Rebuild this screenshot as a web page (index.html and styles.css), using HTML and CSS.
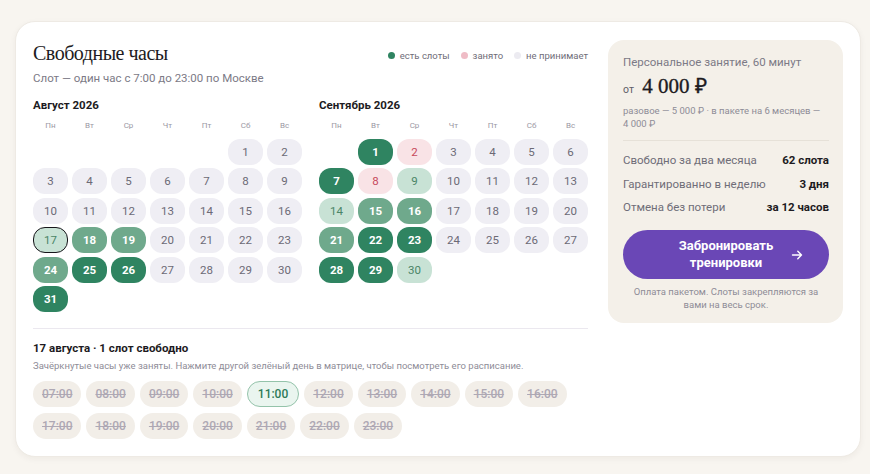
FILE: index.html
```html
<!DOCTYPE html>
<html lang="ru">
<head>
    <meta charset="UTF-8">
    <meta name="viewport" content="width=device-width, initial-scale=1.0">
    <title>Свободные часы</title>
    <link rel="stylesheet" href="styles.css">
</head>
<body>

<div class="card">
    <div class="schedule">
        <div class="schedule-head">
            <div>
                <h1>Свободные часы</h1>
                <p class="subtitle">Слот — один час с 7:00 до 23:00 по Москве</p>
            </div>
            <ul class="legend">
                <li><span class="dot dot-free"></span>есть слоты</li>
                <li><span class="dot dot-busy"></span>занято</li>
                <li><span class="dot dot-off"></span>не принимает</li>
            </ul>
        </div>

        <div class="months">
            <div class="month">
                <h3>Август 2026</h3>
                <div class="grid" id="aug"></div>
            </div>
            <div class="month">
                <h3>Сентябрь 2026</h3>
                <div class="grid" id="sep"></div>
            </div>
        </div>

        <div class="day-slots">
            <h4>17 августа · 1 слот свободно</h4>
            <p class="hint">Зачёркнутые часы уже заняты. Нажмите другой зелёный день в матрице, чтобы посмотреть его расписание.</p>
            <div class="slots" id="slots"></div>
        </div>
    </div>

    <aside class="offer">
        <p class="offer-title">Персональное занятие, 60 минут</p>
        <p class="price"><span class="from">от</span> 4&nbsp;000&nbsp;₽</p>
        <p class="price-note">разовое — 5&nbsp;000&nbsp;₽ · в пакете на 6 месяцев — 4&nbsp;000&nbsp;₽</p>
        <dl class="facts">
            <div><dt>Свободно за два месяца</dt><dd>62 слота</dd></div>
            <div><dt>Гарантированно в неделю</dt><dd>3 дня</dd></div>
            <div><dt>Отмена без потери</dt><dd>за 12 часов</dd></div>
        </dl>
        <a href="#" class="book-button">
            <span>Забронировать<br>тренировки</span>
            <svg width="12" height="12" viewBox="0 0 12 12" fill="none" stroke="#fff" stroke-width="1.4" stroke-linecap="round" stroke-linejoin="round">
                <path d="M1.5 6h9M6.8 2.3 10.5 6 6.8 9.7"/>
            </svg>
        </a>
        <p class="offer-foot">Оплата пакетом. Слоты закрепляются за вами на весь срок.</p>
    </aside>
</div>

<script>
    // day -> state; anything missing is a day off
    var months = {
        aug: { offset: 5, days: 31, marks: { 17: 'light picked', 18: 'mid', 19: 'mid', 24: 'mid', 25: 'dark', 26: 'dark', 31: 'dark' } },
        sep: { offset: 1, days: 30, marks: { 1: 'dark', 2: 'busy', 7: 'dark', 8: 'busy', 9: 'light', 14: 'light', 15: 'mid', 16: 'mid', 21: 'mid', 22: 'dark', 23: 'dark', 28: 'dark', 29: 'dark', 30: 'light' } }
    };
    var weekdays = ['Пн', 'Вт', 'Ср', 'Чт', 'Пт', 'Сб', 'Вс'];

    Object.keys(months).forEach(function(id) {
        var m = months[id];
        var grid = document.getElementById(id);
        weekdays.forEach(function(w) {
            var el = document.createElement('span');
            el.className = 'wd';
            el.textContent = w;
            grid.appendChild(el);
        });
        for (var i = 0; i < m.offset; i++) {
            grid.appendChild(document.createElement('span'));
        }
        for (var d = 1; d <= m.days; d++) {
            var cell = document.createElement('span');
            cell.className = 'day ' + (m.marks[d] || 'off');
            cell.textContent = d;
            grid.appendChild(cell);
        }
    });

    var slots = document.getElementById('slots');
    for (var h = 7; h <= 23; h++) {
        var s = document.createElement('span');
        s.className = h === 11 ? 'slot open' : 'slot taken';
        s.textContent = (h < 10 ? '0' : '') + h + ':00';
        slots.appendChild(s);
    }
</script>

</body>
</html>
```

FILE: styles.css
```css
body {
    margin: 0;
    padding: 21px 9px 19px 15px;
    background-color: #f8f5f0;
    font-family: Roboto, "Noto Sans", sans-serif;
    color: #1d1b22;
}
p, h1, h3, h4, ul, dl, dd {
    margin: 0;
    padding: 0;
}
.card {
    display: grid;
    grid-template-columns: 1fr 235px;
    gap: 20px;
    align-items: start;
    padding: 18px 18px 17px 17px;
    background-color: #fff;
    border-radius: 20px;
    border: 1px solid #eeeae4;
    box-shadow: 0 2px 6px rgba(60, 40, 20, 0.05);
}

/* header */
.schedule-head {
    display: flex;
    justify-content: space-between;
    align-items: flex-start;
}
h1 {
    font-family: "Liberation Serif", serif;
    font-weight: 400;
    font-size: 20px;
    line-height: 26px;
    letter-spacing: -0.5px;
}
.subtitle {
    margin-top: 5px;
    font-size: 11.5px;
    line-height: 15px;
    color: #7c7a86;
}
.legend {
    list-style: none;
    display: flex;
    gap: 11px;
    margin-top: 10px;
    font-size: 9.5px;
    color: #6f6d78;
}
.legend li {
    display: flex;
    align-items: center;
    gap: 5px;
}
.dot {
    width: 7px;
    height: 7px;
    border-radius: 50%;
}
.dot-free { background-color: #2f8461; }
.dot-busy { background-color: #efbcc6; }
.dot-off { background-color: #ecebf1; }

/* calendars */
.months {
    display: flex;
    gap: 17px;
    margin-top: 12px;
}
.month h3 {
    font-size: 11.5px;
    line-height: 14px;
    font-weight: 700;
    margin-bottom: 9px;
}
.grid {
    display: grid;
    grid-template-columns: repeat(7, 35px);
    grid-template-rows: 14px;
    grid-auto-rows: 26px;
    column-gap: 4px;
    row-gap: 3.5px;
}
.grid .wd {
    font-size: 8px;
    line-height: 10px;
    color: #9a98a3;
    text-align: center;
}
.day {
    display: flex;
    align-items: center;
    justify-content: center;
    border-radius: 12px;
    font-size: 11.5px;
    box-sizing: border-box;
}
.day.off { background-color: #efeef4; color: #6c6a76; }
.day.busy { background-color: #f9e3e6; color: #c7485c; }
.day.light { background-color: #c8e2d5; color: #4a8567; }
.day.mid { background-color: #6fa98c; color: #fff; font-weight: 700; }
.day.dark { background-color: #2f8461; color: #fff; font-weight: 700; }
.day.picked { border: 1.5px solid #16151a; }

/* slots of the chosen day */
.day-slots {
    margin-top: 16px;
    padding-top: 12px;
    border-top: 1px solid #ebe8ef;
}
.day-slots h4 {
    margin: 0;
    font-size: 11.5px;
    line-height: 14px;
    font-weight: 700;
}
.hint {
    margin-top: 5px;
    font-size: 9.5px;
    line-height: 12px;
    color: #8e8c97;
}
.slots {
    display: flex;
    flex-wrap: wrap;
    gap: 6px 5px;
    margin-top: 9px;
}
.slot {
    padding: 0 9px;
    height: 26px;
    line-height: 26px;
    border-radius: 13px;
    font-size: 12px;
    font-weight: 500;
    box-sizing: border-box;
}
.slot.taken {
    background-color: #f2eee8;
    color: #aea8b4;
    text-decoration: line-through;
}
.slot.open {
    background-color: #eaf5ef;
    color: #2f7a58;
    border: 1px solid #94c3aa;
    line-height: 24px;
    padding: 0 10px;
}

/* price panel */
.offer {
    background-color: #f4f0e9;
    border-radius: 16px;
    padding: 14px 14px 12px 15px;
}
.offer-title {
    font-size: 11.5px;
    color: #7c7a86;
    line-height: 16px;
}
.price {
    margin-top: 5px;
    font-family: "Liberation Serif", serif;
    font-size: 21px;
    font-weight: 400;
    line-height: 22px;
    -webkit-text-stroke: 0.35px #1d1b22;
}
.price .from {
    font-family: Roboto, sans-serif;
    font-size: 10.5px;
    color: #5f5d68;
    margin-right: 3px;
    -webkit-text-stroke: 0;
}
.price-note {
    margin-top: 3px;
    font-size: 9.5px;
    line-height: 13px;
    color: #8e8c97;
}
.facts {
    margin-top: 10px;
    padding-top: 8px;
    border-top: 1px solid #e6e1d8;
}
.facts div {
    display: flex;
    justify-content: space-between;
    font-size: 11.5px;
    line-height: 23.5px;
}
.facts dt { color: #6f6d78; }
.facts dd { font-weight: 700; color: #1d1b22; }
.book-button {
    display: flex;
    align-items: center;
    justify-content: center;
    position: relative;
    margin-top: 10px;
    height: 49px;
    border-radius: 25px;
    background-color: #6a47b6;
    color: #fff;
    text-decoration: none;
    font-size: 13px;
    font-weight: 700;
    line-height: 17px;
    text-align: center;
}
.book-button svg {
    position: absolute;
    right: 26px;
    top: 19px;
}
.offer-foot {
    margin-top: 6px;
    font-size: 9.5px;
    line-height: 13px;
    color: #8e8c97;
    text-align: center;
    padding: 0 6px;
}
```
